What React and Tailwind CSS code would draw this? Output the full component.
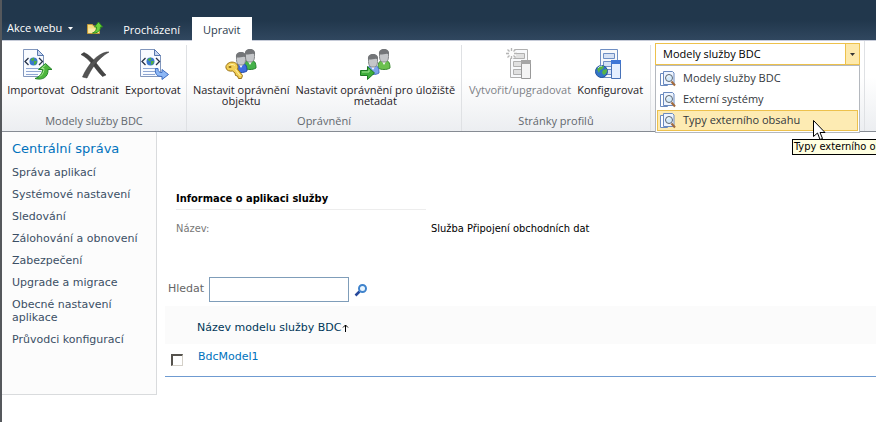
import React, { useState } from "react";

const siteLinks = [
  "Správa aplikací",
  "Systémové nastavení",
  "Sledování",
  "Zálohování a obnovení",
  "Zabezpečení",
  "Upgrade a migrace",
  "Obecné nastavení aplikace",
  "Průvodci konfigurací",
];

const views = ["Modely služby BDC", "Externí systémy", "Typy externího obsahu"];

// Document with code brackets and a globe, shared by import and export
const CodeDocument = () => (
  <>
    <path d="M3.500 1.500h14l6 6v21h-20z" fill="#f8fbff" stroke="#8297bd" />
    <path d="M17.500 1.500v6h6z" fill="#c9d8f0" stroke="#5878ae" />
    <path d="M6 20.500h15M6 23.500h15M6 26.500h12" stroke="#8fa6d2" />
    <path d="M8.500 10 5 13.500l3.500 3.500M19 10l3.500 3.500-3.500 3.500" fill="none" stroke="#26324a" strokeWidth="1.300" />
    <circle cx="13.500" cy="13.500" r="4" fill="#3a78cf" />
    <path d="M10.500 11.500l3-2 1 2-2 2zM14 13l3 0-1 3-2 1z" fill="#4fae45" />
  </>
);

const ImportIcon = () => (
  <svg width="32" height="32" viewBox="0 0 32 32" aria-hidden="true">
    <CodeDocument />
    <path d="M15 30.500c7 2 13.500-1 13-9h4L25.500 15.500 18.500 21.500h4c0 4-3 7.500-7.500 9z" fill="#4cb63c" stroke="#26862a" />
    <path d="M25.500 17l-4 3.500h2.500c0 3-1 5.500-4 8" fill="none" stroke="#a8e694" />
  </svg>
);

const ExportIcon = () => (
  <svg width="32" height="32" viewBox="0 0 32 32" aria-hidden="true">
    <CodeDocument />
    <path d="M18.500 20.500h2.500c0 3 1 4 4 4v-3l6.500 5-6.500 5v-3c-6 0-7-3-6.500-8z" fill="#8db7f5" stroke="#3f6cc0" />
  </svg>
);

const DeleteIcon = () => (
  <svg width="32" height="32" viewBox="0 0 32 32" aria-hidden="true">
    <path d="M2 6.500 5 4.500c5 2 10 7.500 12.500 11C21 20 24 24 27 27l-3.500 1.500C19 24 16 19.500 13.500 16.500 10 12 6 8.500 2 6.500z" fill="#454545" stroke="#2b2b2b" strokeWidth="0.500" />
    <path d="M30 4c-6 3.500-11 8-14 12.500C12.500 21 10 26 8 30l-4.500-1C6 23 9.500 17.500 14 12.500 18 8 23 5 27.500 4z" fill="#555" stroke="#303030" strokeWidth="0.500" />
  </svg>
);

const Person = ({ x, y, shirt, edge }) => (
  <g transform={`translate(${x} ${y})`}>
    <path d="M0 19c0-6 2-8 6-8s6 2 6 8c-3 2-9 2-12 0z" fill={shirt} stroke={edge} />
    <path d="M3.500 11.500 6 16l2.500-4.500z" fill="#fff" />
    <path d="M1.500 4.500c0-5 9-5 9 0v3c0 5-2.500 5.500-4.500 5.500s-4.500-.5-4.500-5.500z" fill="#c4c6c9" stroke="#858789" />
    <path d="M1 5.500C.5 1.500 3 0 6 0s5.500 1.500 5 5.500C9 3.500 5 6 1 5.500z" fill="#747679" />
  </g>
);

const PermissionKeyIcon = () => (
  <svg width="32" height="32" viewBox="0 0 32 32" aria-hidden="true">
    <Person x={19} y={1} shirt="#45b24a" edge="#27802d" />
    <Person x={10} y={4} shirt="#3f6de0" edge="#2448a5" />
    <path d="M3 15.500c3-2.500 8-1.500 9.500 1.500.8 1.500.5 3 0 4l5 6.500-1 3h-3l-1-2.500-2-.5-.5-2.500-2.500-2c-3 .5-6-.5-6.500-3-.5-2 .5-3.500 2-4.500z" fill="#f2cf55" stroke="#9c7417" />
    <path d="M4 17.500c2-1.500 4-1.500 6 0M10.500 21.500l5 6.500" fill="none" stroke="#fff1a8" />
    <ellipse cx="5" cy="19" rx="1.500" ry="1" fill="#8d6a18" />
  </svg>
);

const PermissionArrowIcon = () => (
  <svg width="32" height="32" viewBox="0 0 32 32" aria-hidden="true">
    <Person x={19} y={1} shirt="#6cc04f" edge="#3b8a31" />
    <Person x={8} y={6} shirt="#7ea3ee" edge="#4a70c0" />
    <path d="M1.500 22.500h7v-4l7 6.500-7 6.500v-4h-7z" fill="#3fae3c" stroke="#1c7a24" />
    <path d="M3 24h7v-2.500" fill="none" stroke="#a3e594" />
  </svg>
);

const ProfileIcon = ({ disabled }) => {
  const edge = disabled ? "#b0b0b0" : "#6f8fc4";
  const fill = disabled ? "#e0e0e0" : "#d5e1f5";
  return (
    <svg width="32" height="32" viewBox="0 0 32 32" aria-hidden="true">
      <path d="M6.500 1.500h17v28h-17z" fill="#f8f9fb" stroke={edge} />
      <path d="M9.500 5.500h11v5h-11zM9.500 13.500h8v5h-8zM9.500 21.500h8v5h-8z" fill={fill} stroke={edge} />
      <path d="M17.500 12.500h9v18h-9z" fill={disabled ? "#f4f4f4" : "#e5efff"} stroke={disabled ? "#999" : "#4772b8"} />
      <path d="M17 12h10v4H17z" fill={disabled ? "#a5a5a5" : "#3e76d6"} />
      {disabled ? (
        <>
          <circle cx="7.500" cy="5.500" r="5" fill="#fbfbfb" />
          <path d="M7.500 0v3M7.500 8v3M2 5.500h3M10 5.500h3M3.500 1.500l2 2M9.500 7.500l2 2M3.500 9.500l2-2M11.500 1.500l-2 2" stroke="#b5b5b5" strokeWidth="1.300" />
        </>
      ) : (
        <>
          <circle cx="7.500" cy="23.500" r="6" fill="#3275c9" stroke="#24539b" />
          <path d="M3 21l3-3 4 0-1 3-3 1-1 3zM9 22l4-1c.5 3-1 5-3 6l-2-2z" fill="#57b546" />
          <path d="M4 20c1-1.500 2-2 4-2" fill="none" stroke="#cfe6ff" />
        </>
      )}
    </svg>
  );
};

const ViewIcon = () => (
  <svg width="16" height="16" viewBox="0 0 16 16" aria-hidden="true" className="shrink-0">
    <path d="M.5 2.500h7v12h-7z" fill="#fff" stroke="#6a8abf" />
    <path d="M3.500.5h9l1.500 1.500v11.500h-10.500z" fill="#edf4ff" stroke="#6a8abf" />
    <path d="M11.500 10.500l3.500 4" stroke="#a26a3c" strokeWidth="2" />
    <circle cx="9" cy="7" r="3.500" fill="#d5ebfb" stroke="#5d6670" />
    <path d="M7 6.500c.5-1.500 1.500-1.500 2.500-1.500" fill="none" stroke="#fff" />
  </svg>
);

const FolderUpIcon = () => (
  <svg width="16" height="16" viewBox="0 0 16 16" aria-hidden="true">
    <path d="M.5 4.500h5l1 1.500h6v7.500h-12z" fill="#f6dc83" stroke="#c29a38" />
    <path d="M1.500 8.500h10.500v4.500H1.500z" fill="#fbe9a8" />
    <path d="M5.500 13c3-1 4-3 4-6H7.500L11.500 2l4 5h-2c0 3.500-3 6.500-8 6z" fill="#6ed33c" stroke="#2f8f1f" />
  </svg>
);

const SearchIcon = () => (
  <svg width="14" height="14" viewBox="0 0 14 14" aria-hidden="true">
    <path d="M5.500 8.500 1.500 12.500" stroke="#27489b" strokeWidth="2.500" />
    <circle cx="8.500" cy="5.500" r="3.500" fill="#eaf6ff" stroke="#3f83cc" strokeWidth="2" />
  </svg>
);

const Cursor = () => (
  <svg width="13" height="21" viewBox="0 0 13 21" aria-hidden="true" className="pointer-events-none absolute left-[156px] top-[10px] z-20">
    <path d="M.5.500v16l4-3.500 2.500 6.500 2.500-1-2.500-6h5z" fill="#fff" stroke="#000" />
  </svg>
);

const RibbonButton = ({ icon, label, disabled }) => (
  <button
    type="button"
    disabled={disabled}
    className={`flex flex-col items-center gap-1 text-center leading-[11px] whitespace-nowrap ${
      disabled ? "text-[#7c8086]" : "text-[#1f2226]"
    }`}
  >
    {icon}
    <span className="whitespace-pre-line">{label}</span>
  </button>
);

const RibbonGroup = ({ title, className = "", children }) => (
  <section className={`mt-1 flex flex-col justify-between border-r border-[#dfe1e4] pt-[3px] pb-[2px] ${className}`}>
    <div className="flex justify-center gap-[6px]">{children}</div>
    <h2 className="text-center leading-4 text-[#62676d]">{title}</h2>
  </section>
);

const ViewPicker = () => {
  const [view, setView] = useState(views[0]);

  return (
    <div className="relative ml-1 mt-[2px] w-[205px]">
      <div className="relative">
        <select
          aria-label="Zobrazení"
          value={view}
          onChange={(e) => setView(e.target.value)}
          className="block h-[22px] w-full appearance-none border border-[#edc14c] bg-white pl-[7px] pr-5 text-black outline-none"
        >
          {views.map((v) => (
            <option key={v}>{v}</option>
          ))}
        </select>
        <span className="pointer-events-none absolute inset-y-0 right-0 flex w-[15px] items-center justify-center border border-[#edc14c] bg-[#fde9ac]">
          <svg width="5" height="3" viewBox="0 0 5 3" aria-hidden="true">
            <path d="M0 0h5L2.500 3z" fill="#333" />
          </svg>
        </span>
      </div>
      <ul className="absolute left-0 top-full z-10 w-full border border-[#b4b8be] bg-white p-[1px] pt-[2px]">
        {views.map((v, i) => (
          <li key={v} className="relative">
            <button
              type="button"
              onClick={() => setView(v)}
              className={`flex h-[21px] w-full items-center gap-[7px] border pl-[2px] text-left text-[#33373c] ${
                i === 2 ? "border-[#edc14c] bg-[#fdebb3]" : "border-transparent"
              }`}
            >
              <ViewIcon />
              {v}
            </button>
            {i === 2 && (
              <>
                <Cursor />
                <div
                  role="tooltip"
                  className="absolute left-[135px] top-[29px] border border-black bg-[#ffffe1] px-[1px] font-['DejaVu_Sans_Condensed','DejaVu_Sans',sans-serif] leading-[14px] whitespace-nowrap text-black"
                >
                  {v}
                </div>
              </>
            )}
          </li>
        ))}
      </ul>
    </div>
  );
};

const App = () => {
  const [search, setSearch] = useState("");

  return (
    <div className="min-h-screen overflow-hidden border-l-2 border-[#55585c] bg-white font-['DejaVu_Sans',sans-serif] text-[11px]">
      <header className="flex h-[41px] items-end border-b border-[#c6cbd8] bg-linear-to-b from-[#21374c] from-50% to-[#30475f] font-['Open_Sans',sans-serif] text-white">
        <button type="button" className="flex h-6 items-center gap-[6px] pl-[5px]">
          Akce webu
          <svg width="5" height="3" viewBox="0 0 5 3" aria-hidden="true">
            <path d="M0 0h5L2.500 3z" fill="#fff" />
          </svg>
        </button>
        <button type="button" aria-label="Přejít nahoru" className="ml-[14px] mb-1">
          <FolderUpIcon />
        </button>
        <nav className="ml-3 flex items-end">
          <a href="#prochazeni" className="flex h-5 items-center px-2">Procházení</a>
          <a href="#upravit" className="ml-1 -mb-px flex h-6 items-center bg-white px-[11px] pt-[2px] text-[#2b3a4c]">Upravit</a>
        </nav>
      </header>

      <div className="flex h-[91px] border-b border-[#868b93] bg-linear-to-b from-white from-40% to-[#eceef1] font-['Open_Sans',sans-serif]">
        <RibbonGroup title="Modely služby BDC" className="w-[185px]">
          <RibbonButton icon={<ImportIcon />} label="Importovat" />
          <RibbonButton icon={<DeleteIcon />} label="Odstranit" />
          <RibbonButton icon={<ExportIcon />} label="Exportovat" />
        </RibbonGroup>
        <RibbonGroup title="Oprávnění" className="w-[275px]">
          <RibbonButton icon={<PermissionKeyIcon />} label={"Nastavit oprávnění\nobjektu"} />
          <RibbonButton icon={<PermissionArrowIcon />} label={"Nastavit oprávnění pro úložiště\nmetadat"} />
        </RibbonGroup>
        <RibbonGroup title="Stránky profilů" className="w-[189px]">
          <RibbonButton icon={<ProfileIcon disabled />} label="Vytvořit/upgradovat" disabled />
          <RibbonButton icon={<ProfileIcon />} label="Konfigurovat" />
        </RibbonGroup>
        <div className="border-r border-[#dfe1e4] pr-1">
          <ViewPicker />
        </div>
      </div>

      <div className="flex items-start">
        <aside className="w-[155px] shrink-0 border-r border-b border-[#d9dbdd] bg-[#fcfcfc] px-[10px] pt-2 pb-12">
          <h1 className="text-[13px] leading-[18px] text-[#0072bc]">
            <a href="#centralni-sprava">Centrální správa</a>
          </h1>
          <ul className="mt-2 space-y-[9px] leading-[13px] text-[#3b4f65]">
            {siteLinks.map((link) => (
              <li key={link}>
                <a href="#nastaveni">{link}</a>
              </li>
            ))}
          </ul>
        </aside>

        <main className="min-w-0 flex-1 pt-[59px] pl-2">
          <section className="px-[11px] font-['DejaVu_Sans_Condensed','DejaVu_Sans',sans-serif]">
            <h2 className="w-[250px] border-b border-[#ededed] pb-[3px] leading-[15px] font-bold text-black">
              Informace o aplikaci služby
            </h2>
            <dl className="mt-3 flex leading-[14px]">
              <dt className="w-[255px] text-[#777]">Název:</dt>
              <dd className="text-black">Služba Připojení obchodních dat</dd>
            </dl>
          </section>

          <form className="mt-[41px] flex items-center pl-[3px]" onSubmit={(e) => e.preventDefault()}>
            <label htmlFor="search" className="w-[41px] text-[#666]">Hledat</label>
            <input
              id="search"
              type="text"
              value={search}
              onChange={(e) => setSearch(e.target.value)}
              className="h-[25px] w-[140px] border border-[#7f9db9] bg-white px-1 outline-none"
            />
            <button type="submit" aria-label="Hledat" className="ml-[5px]">
              <SearchIcon />
            </button>
          </form>

          <table className="mt-1 w-full">
            <thead>
              <tr className="h-[38px] bg-[#fbfbfb] text-left text-[#003759]">
                <th className="w-8" />
                <th className="pt-[6px] font-normal">
                  <span className="flex items-center gap-[1px]">
                    Název modelu služby BDC
                    <svg width="7" height="8" viewBox="0 0 7 8" aria-hidden="true">
                      <path d="M3.500 8V1M1 3.500 3.500 1 6 3.500" fill="none" stroke="#000" />
                    </svg>
                  </span>
                </th>
              </tr>
            </thead>
            <tbody>
              <tr className="h-8 border-b border-[#6f9bd1] align-top">
                <td className="pt-[10px] pl-[6px]">
                  <input
                    type="checkbox"
                    aria-label="BdcModel1"
                    className="block size-3 appearance-none border-t-2 border-l-2 border-r border-b border-t-[#55524d] border-l-[#55524d] border-r-[#d4d0c8] border-b-[#d4d0c8] bg-white checked:bg-[#0072bc]"
                  />
                </td>
                <td className="pt-[6px] pl-[1px] leading-[14px]">
                  <a href="#bdcmodel1" className="text-[#0072bc]">BdcModel1</a>
                </td>
              </tr>
            </tbody>
          </table>
        </main>
      </div>
    </div>
  );
};

export default App;
